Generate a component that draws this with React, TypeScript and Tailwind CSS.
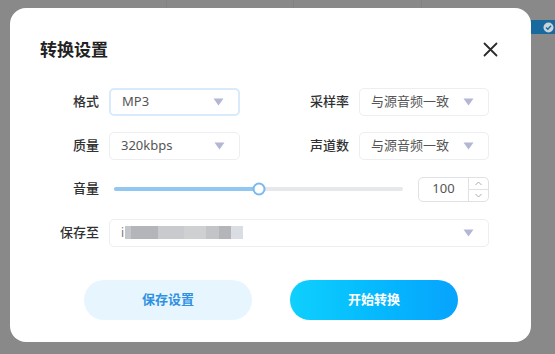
const font = "font-['Noto_Sans','Noto_Sans_CJK_SC',sans-serif]";

function Caret() {
  return (
    <svg width="11" height="8" viewBox="0 0 11 8" className="shrink-0">
      <path d="M0.5 0.5 H10.5 L5.5 7.5 Z" fill="#b4b6d6" />
    </svg>
  );
}

function Select({ value, focused }: { value: string; focused?: boolean }) {
  return (
    <div
      className={`flex h-[28px] items-center justify-between rounded-[5px] bg-white pl-[11px] pr-[14px] text-[13px] text-[#555] ${
        focused ? "border-2 border-[#d9eafa] pl-[10px] pr-[13px]" : "border border-[#eceef2]"
      }`}
    >
      <span>{value}</span>
      <Caret />
    </div>
  );
}

function Label({ text }: { text: string }) {
  return <div className="text-right text-[13px] font-medium text-[#303133]">{text}</div>;
}

export default function App() {
  return (
    <div className={`relative h-[354px] w-[555px] overflow-hidden bg-[#898989] ${font}`}>
      {/* page behind the overlay */}
      <div className="flex h-[8px] pl-[166px]">
        <div className="w-[127px] border-l border-[#828282]" />
        <div className="w-[128px] border-l border-[#828282]" />
        <div className="border-l border-[#828282]" />
      </div>
      <div className="absolute left-[531px] top-[20px] flex h-[14px] w-[24px] items-center justify-end bg-[#17699e] pr-[1px]">
        <svg width="11" height="11" viewBox="0 0 11 11">
          <circle cx="5.5" cy="5.5" r="5" fill="#c9d3da" />
          <path d="M3 5.6 L4.8 7.3 L8 3.8" stroke="#17699e" strokeWidth="1.4" fill="none" />
        </svg>
      </div>

      {/* dialog */}
      <div className="absolute left-[10px] top-[8px] h-[334px] w-[521px] rounded-[16px] bg-white pl-[30px] pr-[42px] pt-[29px]">
        <div className="flex items-center justify-between">
          <h1 className="text-[17px] font-bold text-[#222]">转换设置</h1>
          <svg width="15" height="15" viewBox="0 0 15 15" className="mr-[-9px]">
            <path d="M1.5 1.5 L13.5 13.5 M13.5 1.5 L1.5 13.5" stroke="#2b2b2b" strokeWidth="1.8" strokeLinecap="round" />
          </svg>
        </div>

        <div className="mt-[25px] grid grid-cols-[59px_131px_1fr_130px] items-center gap-x-[10px] gap-y-[16px]">
          <Label text="格式" />
          <Select value="MP3" focused />
          <Label text="采样率" />
          <Select value="与源音频一致" />

          <Label text="质量" />
          <Select value="320kbps" />
          <Label text="声道数" />
          <Select value="与源音频一致" />

          <Label text="音量" />
          <div className="col-span-3 flex h-[27px] items-center gap-[15px] pl-[5px]">
            <div className="relative h-[4px] flex-1 rounded-full bg-[#e6e8eb]">
              <div className="h-full w-1/2 rounded-full bg-[#92c7f2]" />
              <div className="absolute left-1/2 top-1/2 h-[13px] w-[13px] -translate-x-1/2 -translate-y-1/2 rounded-full border-2 border-[#79b9ee] bg-white" />
            </div>
            <div className="flex h-[25px] w-[71px] rounded-[5px] border border-[#dfe1e6] bg-white">
              <div className="flex flex-1 items-center justify-center text-[13px] text-[#555]">100</div>
              <div className="flex w-[20px] flex-col border-l border-[#dfe1e6]">
                <div className="flex flex-1 items-center justify-center border-b border-[#dfe1e6]">
                  <svg width="7" height="5" viewBox="0 0 7 5">
                    <path d="M0.5 4 L3.5 1 L6.5 4" stroke="#a8abb2" fill="none" />
                  </svg>
                </div>
                <div className="flex flex-1 items-center justify-center">
                  <svg width="7" height="5" viewBox="0 0 7 5">
                    <path d="M0.5 1 L3.5 4 L6.5 1" stroke="#a8abb2" fill="none" />
                  </svg>
                </div>
              </div>
            </div>
          </div>

          <Label text="保存至" />
          <div className="col-span-3 flex h-[28px] items-center justify-between rounded-[5px] border border-[#eceef2] pl-[11px] pr-[14px]">
            <div className="flex h-[13px] items-stretch">
              <span className="mr-[1px] text-[12px] leading-[13px] text-[#777]">i</span>
              <div className="w-[6px] bg-[#c4c6ca]" />
              <div className="w-[27px] bg-[#b3b5ba]" />
              <div className="w-[26px] bg-[#c9cacd]" />
              <div className="w-[22px] bg-[#cfd0d2]" />
              <div className="w-[13px] bg-[#c3c4c7]" />
              <div className="w-[12px] bg-[#b4b5b9]" />
              <div className="w-[12px] bg-[#dadee4]" />
            </div>
            <Caret />
          </div>
        </div>

        <div className="mt-[33px] flex justify-center gap-[38px] pl-[13px]">
          <button className="h-[40px] w-[168px] rounded-full bg-[#e7f6fe] text-[13px] font-bold text-[#3091e2]">
            保存设置
          </button>
          <button className="h-[40px] w-[168px] rounded-full bg-gradient-to-r from-[#0fd0fd] to-[#08a3fd] text-[13px] font-bold text-white">
            开始转换
          </button>
        </div>
      </div>
    </div>
  );
}
